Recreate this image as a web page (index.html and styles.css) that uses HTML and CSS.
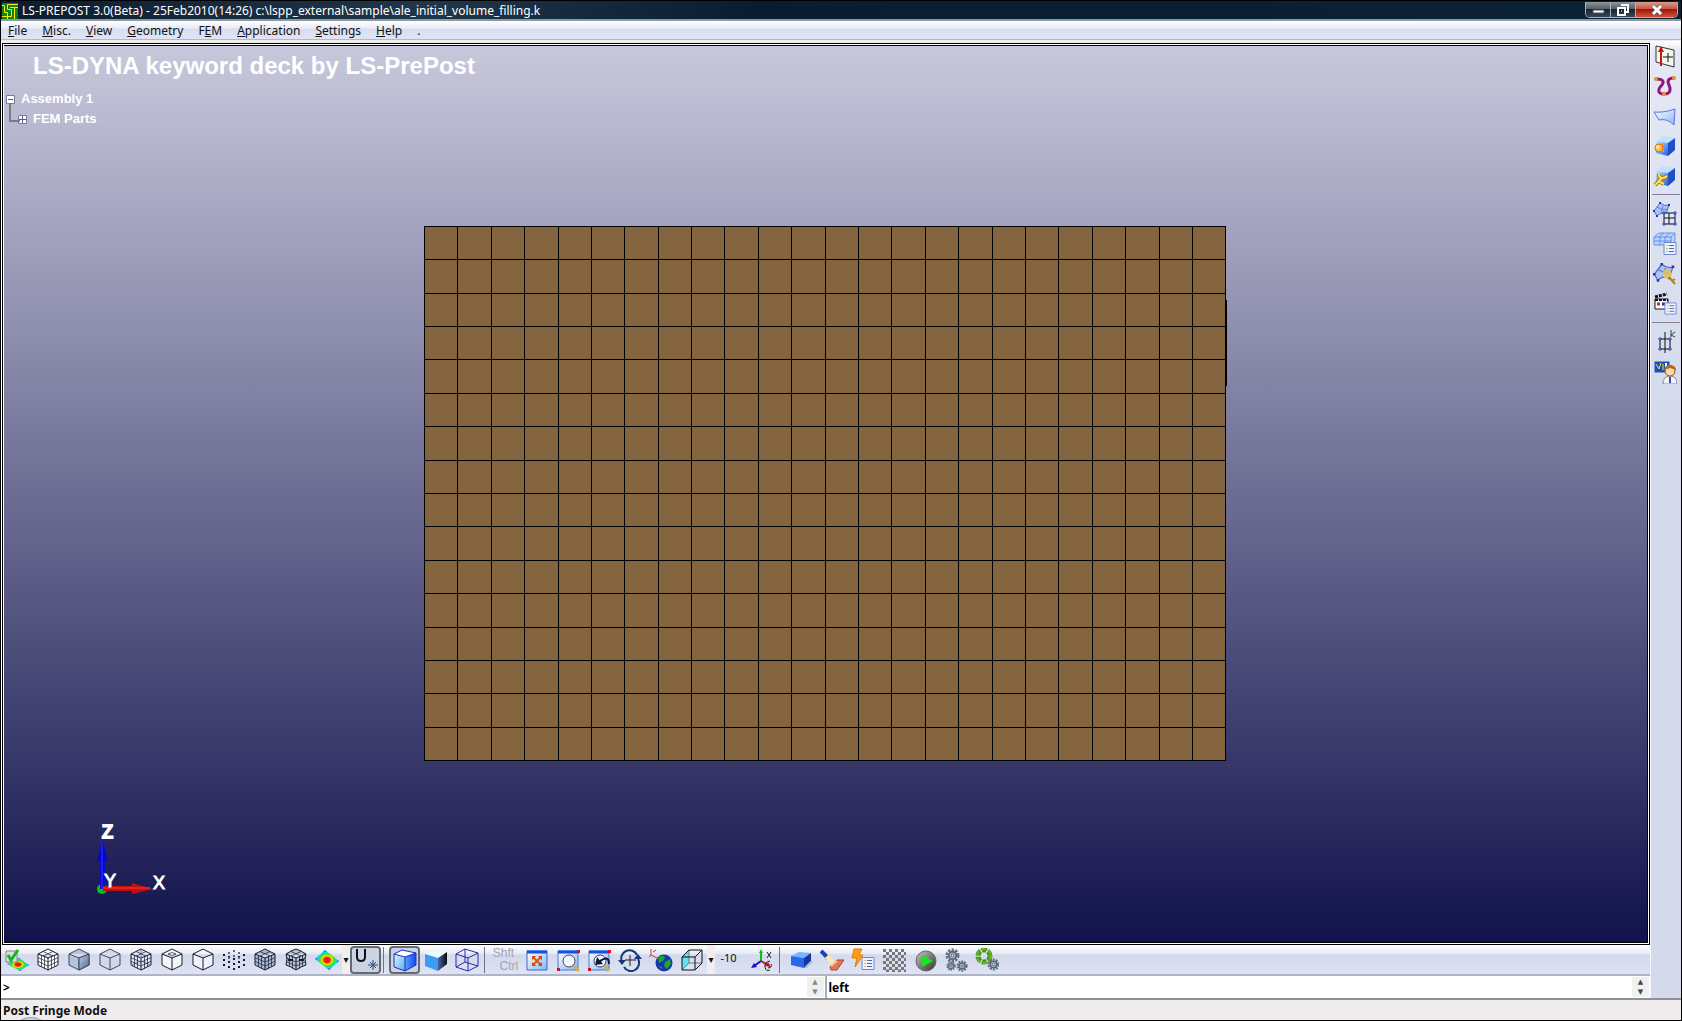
FILE: index.html
```html
<!DOCTYPE html>
<html lang="en">
<head>
<meta charset="utf-8">
<title>LS-PREPOST 3.0(Beta)</title>
<link rel="stylesheet" href="styles.css">
</head>
<body>
<svg class="defs" aria-hidden="true">
  <defs>
    <linearGradient id="g-blue" x1="0" y1="0" x2="1" y2="1"><stop offset="0" stop-color="#c8e4ff"/><stop offset="1" stop-color="#1c5ce8"/></linearGradient>
    <linearGradient id="g-front" x1="0" y1="0" x2="1" y2="1"><stop offset="0" stop-color="#e0f4ff"/><stop offset="1" stop-color="#58a8f8"/></linearGradient>
    <linearGradient id="g-deep" x1="0" y1="0" x2="1" y2="0"><stop offset="0" stop-color="#58a0f8"/><stop offset="1" stop-color="#1848f0"/></linearGradient>
    <linearGradient id="g-dark" x1="0" y1="0" x2="1" y2="0"><stop offset="0" stop-color="#4a6a9c"/><stop offset="1" stop-color="#050a14"/></linearGradient>
    <linearGradient id="g-steel" x1="0" y1="0" x2="1" y2="1"><stop offset="0" stop-color="#c4d0e4"/><stop offset="1" stop-color="#4c6494"/></linearGradient>
    <linearGradient id="g-window" x1="0" y1="0" x2="1" y2="1"><stop offset="0" stop-color="#fff"/><stop offset="1" stop-color="#86b4f6"/></linearGradient>
    <linearGradient id="g-ball" x1="0" y1="0" x2="1" y2="1"><stop offset="0" stop-color="#c8c8c8"/><stop offset="1" stop-color="#303030"/></linearGradient>
    <radialGradient id="g-fringe"><stop offset="0" stop-color="#e01010"/><stop offset=".28" stop-color="#f03010"/><stop offset=".42" stop-color="#ffe800"/><stop offset=".6" stop-color="#30e030"/><stop offset=".78" stop-color="#10e0e8"/><stop offset="1" stop-color="#1040f0"/></radialGradient>
    <symbol id="cube" viewBox="0 0 24 24"><path d="M12 1 22 6V17L12 22 2 17V6ZM2 6l10 4 10-4M12 10V22"/></symbol>
    <symbol id="mesh" viewBox="0 0 24 24"><path d="M5.500 7.500V18.500M8.500 8.500V20.500M2 9.700 12 14 22 9.700M2 13.300 12 18 22 13.300M15.500 8.500V20.500M18.500 7.500V18.500M7 3.500 17 8M17 3.500 7 8" stroke-width=".7"/></symbol>
    <symbol id="list" viewBox="0 0 14 14"><path d="M1 1H13V13H1Z" fill="#eef2ff" stroke="#7088cc"/><path d="M3 4h2M3 7h2M3 10h2" stroke="#d8b860" stroke-width="1"/><path d="M6 4h5M6 7h5M6 10h5" stroke="#5068b0"/></symbol>
    <symbol id="bluebox" viewBox="0 0 24 24"><path d="M3 7 10 2 22 4 15 9Z" fill="#c0e0ff"/><path d="M3 7 15 9V22L3 19Z" fill="url(#g-blue)"/><path d="M15 9 22 4V16L15 22Z" fill="#1c50c4"/></symbol>
    <symbol id="patch" viewBox="0 0 24 24"><path d="M1 9 7 1Q12 5 16 3L13 12Q7 10 4 14Z" fill="#a8c4f8" stroke="#5868c8"/><path d="M4 5Q9 9 15 7M10 4 8 11" stroke="#6880d8" fill="none"/><path d="M0 9h2M6 1h2M15 3h2M12 12h2M3 14h2" stroke="#2838a8" stroke-width="2"/></symbol>
    <symbol id="gear" viewBox="0 0 16 16"><circle cx="8" cy="8" r="6" fill="none" stroke="#627080" stroke-width="3" stroke-dasharray="2.400 1.400"/><circle cx="8" cy="8" r="4" fill="#b8ccd8" stroke="#5a6874" stroke-width="2"/><circle cx="8" cy="8" r="1.500" fill="#fff" stroke="#345"/></symbol>
  </defs>
</svg>

<div class="app">
  <header class="titlebar">
    <svg class="logo" viewBox="0 0 16 16" aria-hidden="true"><path d="M0 0H16V16H0Z" fill="#108010"/><path d="M0 2.500H2.500V9.500H5.500V16M16 1.500H5.500V6.500H9.500V13.500H0M16 4.500H12.500V16M8 4.500H12" fill="none" stroke="#f4f000"/></svg>
    <h1 class="title">LS-PREPOST 3.0(Beta) - 25Feb2010(14:26) c:\lspp_external\sample\ale_initial_volume_filling.k</h1>
    <div class="caption">
      <button class="cap" aria-label="Minimize"><svg viewBox="0 0 24 16"><path d="M7 8H18V11H7Z" fill="#fff" stroke="#555"/></svg></button>
      <button class="cap" aria-label="Restore"><svg viewBox="0 0 24 16"><path d="M10 3H17V10H15M7 6H14V13H7Z" fill="none" stroke="#fff" stroke-width="2"/><path d="M10 9h1" stroke="#fff"/></svg></button>
      <button class="cap close" aria-label="Close"><svg viewBox="0 0 24 16"><path d="M8 4 16 12M16 4 8 12" stroke="#556" stroke-width="4"/><path d="M8 4 16 12M16 4 8 12" stroke="#fff" stroke-width="3"/></svg></button>
    </div>
  </header>

  <nav class="menu">
    <button><u>F</u>ile</button><button><u>M</u>isc.</button><button><u>V</u>iew</button><button><u>G</u>eometry</button><button>F<u>E</u>M</button><button><u>A</u>pplication</button><button><u>S</u>ettings</button><button><u>H</u>elp</button><button>.</button>
  </nav>

  <div class="work">
    <main class="main">
      <section class="frame">
        <div class="view">
          <svg class="model" viewBox="0 0 1643 896" aria-label="Mesh">
            <path d="M420 180H1221V714H420Z" fill="#84643e"/>
            <path d="M420 180V714M453 180V714M487 180V714M520 180V714M554 180V714M587 180V714M620 180V714M654 180V714M687 180V714M720 180V714M754 180V714M787 180V714M821 180V714M854 180V714M887 180V714M921 180V714M954 180V714M988 180V714M1021 180V714M1054 180V714M1088 180V714M1121 180V714M1155 180V714M1188 180V714M1221 180V714M420 180H1221M420 213H1221M420 247H1221M420 280H1221M420 313H1221M420 347H1221M420 380H1221M420 414H1221M420 447H1221M420 480H1221M420 514H1221M420 547H1221M420 581H1221M420 614H1221M420 647H1221M420 681H1221M420 714H1221M1222 254V339" transform="translate(.5 .5)" class="lines"/>
          </svg>
          <h2 class="deck">LS-DYNA keyword deck by LS-PrePost</h2>
          <ul class="tree">
            <li><svg viewBox="0 0 9 9"><path d="M.5.5H8.500V8.500H.5Z" fill="#fff" stroke="#777a9c"/><path d="M2 4.500H7" stroke="#555880"/></svg>Assembly 1</li>
            <li class="child"><svg viewBox="0 0 9 9"><path d="M.5.5H8.500V8.500H.5Z" fill="#fff" stroke="#777a9c"/><path d="M1 4.500H8M4.500 1V8" stroke="#555880"/></svg>FEM Parts</li>
          </ul>
          <svg class="triad" viewBox="0 0 80 80" aria-label="Axes">
            <circle cx="12" cy="64" r="5" fill="#10c010"/>
            <path d="M10 64V36H7L12.500 14 18 36H15V64Z" fill="#0808c8"/><path d="M12 16V64" stroke="#1c1cf0" stroke-width="2"/>
            <path d="M13 61H42V58L63 64 42 69V66H13Z" fill="#c01010"/><path d="M13 63H60" stroke="#e82020" stroke-width="2"/>
            <g class="axis"><text x="12" y="13" class="bold">Z</text><text x="14" y="62">Y</text><text x="63" y="64">X</text></g>
          </svg>
        </div>
      </section>

      <div class="tools">
        <button class="tool" aria-label="Fringe check"><svg viewBox="0 0 24 24"><path d="M2 16 14 10 24 17 15 23Z" fill="url(#g-fringe)"/><path d="M1 3H12V14H1Z" fill="#ddd" stroke="#888"/><path d="M3 7 6 12 13 2" fill="none" stroke="#10b818" stroke-width="3"/></svg></button>
        <button class="tool" aria-label="Mesh"><svg class="ln" viewBox="0 0 24 24"><use href="#cube" fill="#fff"/><use href="#mesh"/></svg></button>
        <button class="tool" aria-label="Shaded"><svg class="ln gray" viewBox="0 0 24 24"><use href="#cube" fill="#b4c4dc"/><path d="M12 10 22 6V17L12 22Z" fill="url(#g-steel)"/></svg></button>
        <button class="tool" aria-label="Flat"><svg class="ln gray" viewBox="0 0 24 24"><use href="#cube" fill="#d2d8e4"/></svg></button>
        <button class="tool" aria-label="Wireframe"><svg class="ln" viewBox="0 0 24 24"><use href="#cube" fill="#e4e8f8"/><path d="M12 2V14M12 13 2 17M12 13 22 17" stroke="#7080b0"/><use href="#mesh"/></svg></button>
        <button class="tool" aria-label="Feature"><svg class="ln" viewBox="0 0 24 24"><use href="#cube" fill="#f4f6fc"/><path d="M8 6 12 4.500 16 6 12 7.500Z" fill="#fff" stroke-width=".7"/></svg></button>
        <button class="tool" aria-label="Edge"><svg class="ln" viewBox="0 0 24 24"><use href="#cube" fill="#f0f2fa"/></svg></button>
        <button class="tool" aria-label="Nodes"><svg class="dots" viewBox="0 0 24 24"><path d="M2 6V18M7 8V20M12 10V22M17 8V20M22 6V18"/><path d="M7 4V12M12 2V9M17 4V12" class="far"/></svg></button>
        <button class="tool" aria-label="Shaded mesh"><svg class="ln" viewBox="0 0 24 24"><use href="#cube" fill="#a8b8d4"/><use href="#mesh"/></svg></button>
        <button class="tool" aria-label="Shrunk mesh"><svg class="ln" viewBox="0 0 24 24"><path d="M12 1 17 3 22 6 21 11 22 17 17 19 12 22 7 19 2 17 3 11 2 6 7 3ZM2 6 12 10 22 6M12 10V22" fill="#b4c2da"/><use href="#mesh"/><path d="M4 12H9M15 12H20" stroke-width="2"/></svg></button>
        <button class="tool" aria-label="Fringe"><svg viewBox="0 0 24 24"><path d="M0 11 10 2 24 13 14 22Z" fill="url(#g-fringe)"/></svg></button>
        <button class="drop" aria-label="Fringe options">▾</button>
        <button class="tool on" aria-label="Unreferenced nodes"><svg viewBox="0 0 24 24"><path d="M3 1V9Q3 13 7 13T11 9V1" fill="none" stroke="#111" stroke-width="2"/><path d="M19 12V22M14 17H24M16 14 22 20M22 14 16 20" stroke="#304878"/></svg></button>
        <hr>
        <button class="tool on" aria-label="Shade with edges"><svg viewBox="0 0 24 24"><path d="M1 6 12 9V23L1 19Z" fill="url(#g-front)"/><path d="M1 6 9 2 23 5 12 9Z" fill="#fff"/><path d="M12 9 23 5V17L12 23Z" fill="url(#g-deep)"/><path d="M1 6 9 2 23 5V17L12 23 1 19ZM1 6 12 9 23 5M12 9V23" fill="none" stroke="#1830c0"/></svg></button>
        <button class="tool" aria-label="Shade"><svg viewBox="0 0 24 24"><path d="M1 6 9 2 23 4 14 10Z" fill="#eef8ff"/><path d="M1 6 14 10V23L1 18Z" fill="#3c9cf4"/><path d="M14 10 23 4V16L14 23Z" fill="url(#g-dark)"/></svg></button>
        <button class="tool" aria-label="Wire"><svg viewBox="0 0 24 24"><path d="M1 6 10 1 23 5V18L13 23 1 19ZM1 6 13 10 23 5M13 10V23M10 1V14L1 19M10 14 23 18" fill="none" stroke="#2828b0"/></svg></button>
        <hr>
        <button class="tool keys">Shft<br>&nbsp; Ctrl</button>
        <button class="tool" aria-label="Fit"><svg viewBox="0 0 24 24"><path d="M2 3H22V22H2Z" fill="url(#g-window)" stroke="#3868d8"/><path d="M2 4H22" stroke="#1850e0" stroke-width="3"/><path d="M8 9 16 17M16 9 8 17" stroke="#e05808" stroke-width="2"/><path d="M7 8H11L7 12ZM17 8V12L13 8ZM7 18V14L11 18ZM17 18H13L17 14Z" fill="#e04008"/></svg></button>
        <button class="tool" aria-label="Zoom window"><svg viewBox="0 0 24 24"><path d="M2 3H22V22H2Z" fill="url(#g-window)" stroke="#4878dc"/><path d="M2 4H22" stroke="#1850e0" stroke-width="3"/><circle cx="13" cy="13" r="6" fill="#f4f8ff" stroke="#445"/><path d="M18 18 23 23" stroke="#d8b040" stroke-width="3"/><path d="M21 2h3v3h-3zM1 20h3v3H1z" fill="#d01020"/></svg></button>
        <button class="tool" aria-label="Zoom back"><svg viewBox="0 0 24 24"><path d="M2 3H22V22H2Z" fill="url(#g-window)" stroke="#4878dc"/><path d="M2 4H22" stroke="#1850e0" stroke-width="3"/><circle cx="13" cy="13" r="6" fill="#f4f8ff" stroke="#445"/><path d="M18 18 22 23" stroke="#d8b040" stroke-width="3"/><path d="M22 16Q22 6 12 14" fill="none" stroke="#101840" stroke-width="2"/><path d="M8 17 10 9 16 16Z" fill="#101840"/><path d="M21 2h3v3h-3zM1 20h3v3H1z" fill="#d01020"/></svg></button>
        <button class="tool" aria-label="Rotate"><svg viewBox="0 0 24 24"><path d="M4 14A8 8 0 0 1 19 7M20 11A8 8 0 0 1 6 19" fill="none" stroke="#183878" stroke-width="2"/><path d="M0 12H8L4 17ZM16 11H24L20 6Z" fill="#183878"/><path d="M12 7V18M7 12H18" stroke="#222"/></svg></button>
        <button class="tool" aria-label="Globe"><svg viewBox="0 0 24 24"><circle cx="15" cy="15" r="8.500" fill="#1c34b0"/><path d="M9 10Q13 6 16 9L14 13 10 15ZM16 14 21 11 22 16 18 21 15 18ZM9 18 13 19V21Z" fill="#18a828"/><path d="M2 1V7L8 10M2 7 0 9M4 4 7 2" fill="none" stroke="#e03030"/></svg></button>
        <button class="tool" aria-label="View cube"><svg viewBox="0 0 24 24"><path d="M2 9 9 2V15L2 22Z" fill="#60e0f0"/><path d="M9 2V15H22M9 15 2 22" fill="none" stroke="#778"/><path d="M2 9H15V22H2ZM2 9 9 2H22V15L15 22M15 9 22 2" fill="none" stroke="#111"/></svg></button>
        <button class="drop" aria-label="View options">▾</button>
        <button class="tool angle">-10</button>
        <button class="tool" aria-label="Axis rotate"><svg viewBox="0 0 24 24"><path d="M11 13V3" stroke="#10c010" stroke-width="2"/><path d="M9 5 11 1 13 5Z" fill="#10c010"/><path d="M11 13 4 18" stroke="#1010d0" stroke-width="2"/><path d="M1 20 4 15 7 19Z" fill="#1010d0"/><path d="M11 13 18 17" stroke="#d01010" stroke-width="2"/><path d="M21 19 15 18 18 14Z" fill="#d01010"/><path d="M17 4 21 10M21 4 17 10M20 13Q14 14 15 19T20 22M18 20Q23 19 21 16" fill="none" stroke="#222"/></svg></button>
        <hr>
        <button class="tool" aria-label="Block"><svg viewBox="0 0 24 24"><path d="M2 8 10 4 22 5 15 10Z" fill="#78b4ff"/><path d="M2 8 15 10V20L2 17Z" fill="#2868e8"/><path d="M15 10 22 5V13L15 20Z" fill="#1038a0"/><path d="M16 20 23 13" stroke="#a8b8d0" stroke-width="2"/></svg></button>
        <button class="tool" aria-label="Erase"><svg viewBox="0 0 24 24"><path d="M1 3 8 10" stroke="#1844b8" stroke-width="4"/><path d="M7 8 13 15" stroke="#f4eab0" stroke-width="5"/><path d="M10 19 17 12H24L17 22H11Z" fill="#e07858" stroke="#a84830"/><path d="M11 18 17 13" stroke="#fcc0a8" stroke-width="2"/></svg></button>
        <button class="tool" aria-label="Quick list"><svg viewBox="0 0 24 24"><path d="M3 1H11L8 7H12L4 19 6 10H1Z" fill="#fca010" stroke="#e87808"/><use href="#list" x="10" y="8" width="14" height="15"/></svg></button>
        <button class="tool" aria-label="Transparency"><svg viewBox="0 0 24 24"><path d="M1 2.500H24M1 8.500H24M1 14.500H24M1 20.500H24" class="check"/><path d="M4 5.500H24M4 11.500H24M4 17.500H24M4 23H24" class="check"/></svg></button>
        <button class="tool" aria-label="Run"><svg viewBox="0 0 24 24"><circle cx="13" cy="13" r="10" fill="url(#g-ball)" stroke="#666"/><path d="M9 7 20 13 9 19Z" fill="#18e818"/></svg></button>
        <button class="tool" aria-label="Settings gears"><svg viewBox="0 0 24 24"><use href="#gear" x="1" y="0" width="15" height="15"/><use href="#gear" x="12" y="12" width="12" height="12"/><use href="#gear" x="2" y="13" width="10" height="10"/></svg></button>
        <button class="tool" aria-label="Refresh gears"><svg viewBox="0 0 24 24"><circle cx="9" cy="8" r="6" fill="none" stroke="#489818" stroke-width="5" stroke-dasharray="5 1.300"/><circle cx="9" cy="8" r="7" fill="none" stroke="#70b828" stroke-width="2" stroke-dasharray="5 2.300"/><use href="#gear" x="12" y="10" width="13" height="13"/></svg></button>
      </div>

      <div class="commands">
        <div class="field"><input aria-label="Command" value="&gt;"><div class="spin dim"><button aria-label="Previous">▲</button><button aria-label="Next">▼</button></div></div>
        <div class="field"><input aria-label="History" value="left"><div class="spin"><button aria-label="Previous entry">▲</button><button aria-label="Next entry">▼</button></div></div>
      </div>
    </main>

    <aside class="side">
      <button class="tool" aria-label="Reference plane"><svg viewBox="0 0 24 24"><path d="M3 2 21 6V23L3 18Z" fill="#f0f8ee" stroke="#333"/><path d="M8 22V6" stroke="#d01010" stroke-width="2"/><path d="M5 8 8 2 11 8Z" fill="#d01010"/><path d="M15 9V18M10 13H20" stroke="#111"/></svg></button>
      <button class="tool" aria-label="Curve"><svg viewBox="0 0 24 24"><path d="M3 5C12 5 11 9 8 12S4 20 11 20S18 15 16 11S15 4 21 4" fill="none" stroke="#901878" stroke-width="3"/><circle cx="3" cy="5" r="2" fill="#f09020"/><circle cx="11" cy="20" r="2" fill="#f09020"/><circle cx="21" cy="4" r="2" fill="#f09020"/></svg></button>
      <button class="tool" aria-label="Surface"><svg viewBox="0 0 24 24"><path d="M1 8Q10 9 22 5L21 21Q14 14 6 16Z" fill="url(#g-window)" stroke="#5878d8"/></svg></button>
      <button class="tool" aria-label="Solid"><svg viewBox="0 0 24 24"><use href="#bluebox"/><path d="M6 10H11V18H6Z" fill="#f09828"/><circle cx="6" cy="14" r="4" fill="#fcb840" stroke="#d87010"/><circle cx="5" cy="13" r="2" fill="#ffe890"/></svg></button>
      <button class="tool" aria-label="Geometry tools"><svg viewBox="0 0 24 24"><use href="#bluebox"/><path d="M2 21 9 14M6 10Q6 14 9 14T14 12M5 17 11 20" fill="none" stroke="#a87c08" stroke-width="4"/><path d="M2 21 9 14M6 10Q6 14 9 14T14 12M5 17 11 20" fill="none" stroke="#fce060" stroke-width="2"/></svg></button>
      <hr>
      <button class="tool" aria-label="Mesh generation"><svg viewBox="0 0 24 24"><use href="#patch"/><path d="M11 11H22V22H11ZM16 11V22M11 16H22" fill="#dce4f8" stroke="#111"/><path d="M10 10h2v2h-2zM21 10h2v2h-2zM10 21h2v2h-2zM21 21h2v2h-2z" fill="#fff" stroke="#2830a0"/></svg></button>
      <button class="tool" aria-label="Model"><svg viewBox="0 0 24 24"><path d="M1 5 6 1H22L18 5V13H1ZM1 5H18L22 1V9L18 13M7 5V13M12 5V13M1 9H18M6 5 11 1M12 5 17 1" fill="#b8d4ff" stroke="#6890e0"/><use href="#list" x="10" y="9" width="14" height="15"/></svg></button>
      <button class="tool" aria-label="Element tools"><svg viewBox="0 0 24 24"><use href="#patch" y="1" width="30" height="30"/><circle cx="14" cy="12" r="3" fill="none" stroke="#e8c050" stroke-width="3"/><path d="M16 15 22 22M19 19 22 17" stroke="#b88418" stroke-width="2"/></svg></button>
      <button class="tool" aria-label="Post"><svg viewBox="0 0 24 24"><path d="M2 7H15V17H2Z" fill="#fff" stroke="#111"/><path d="M2 5 14 2" stroke="#111" stroke-width="3" stroke-dasharray="3 1"/><path d="M2 8H15" stroke="#111" stroke-width="2" stroke-dasharray="3 1"/><path d="M4 12h3" stroke="#d02020" stroke-width="3"/><path d="M9 12h3" stroke="#2030d0" stroke-width="3"/><use href="#list" x="11" y="9" width="13" height="15"/></svg></button>
      <hr>
      <button class="tool" aria-label="Key points"><svg viewBox="0 0 24 24"><path d="M12 2V23M7 9H17V19H7Z" fill="none" stroke="#111"/><path d="M6 8h2v2H6zM16 8h2v2h-2zM6 18h2v2H6zM16 18h2v2h-2z" fill="#fff" stroke="#2830a0"/><path d="M18 0V7M22 2 18 5 22 7" fill="none" stroke="#185030"/></svg></button>
      <button class="tool" aria-label="User tools"><svg viewBox="0 0 24 24"><path d="M1 1H17V13H1Z" fill="#1c50b8" stroke="#d8e0f0"/><path d="M3 4 6 9 8 3M10 4V10" stroke="#f0e040" fill="none"/><path d="M13 3V10" stroke="#fff" stroke-width="2"/><path d="M10 24Q10 16 17 16T24 24Z" fill="#f4f4fa" stroke="#889"/><circle cx="17" cy="11" r="5" fill="#fcd8a8" stroke="#905010"/><path d="M11 10Q13 4 18 5T23 10L17 8Z" fill="#b86818"/><path d="M17 17V23" stroke="#2850b0" stroke-width="2"/></svg></button>
    </aside>
  </div>

  <footer class="status"><span class="orb"></span><span class="msg">Post Fringe Mode</span></footer>
</div>
</body>
</html>
```
FILE: styles.css
```css
* { box-sizing: border-box; }
body { margin: 0; background: #000; font: 12px/16px "Noto Sans", "Open Sans", sans-serif; color: #111; }
button { border: 0; padding: 0; margin: 0; background: none; font: inherit; color: inherit; }
svg { display: block; }
.defs { position: absolute; width: 0; height: 0; }

.app { display: flex; flex-direction: column; height: 100vh; min-height: 480px; padding: 0 1px 1px; }

.titlebar { display: flex; flex: none; align-items: center; height: 21px; padding: 1px 3px 0 1px; background: linear-gradient(90deg, #0c1c30, #20364a 25%, #0a1c30 45%, #0c2236); border-top: 1px solid #000; border-bottom: 2px solid #8a9ba4; color: #fff; }
.logo { width: 16px; height: 16px; }
.title { flex: 1; margin: 0 0 0 4px; font-size: 12px; font-weight: 400; line-height: 16px; white-space: nowrap; }
.caption { display: flex; align-self: flex-start; height: 16px; border: 1px solid #a8b4bc; border-top: 0; border-radius: 0 0 5px 5px; overflow: hidden; }
.cap { width: 25px; border-right: 1px solid #a8b4bc; background: linear-gradient(#8c98a0, #52606c 45%, #182430 50%, #384858); }
.cap svg { height: 16px; margin: auto; }
.close { width: 41px; border-right: 0; background: linear-gradient(#dc9a8c, #c45848 45%, #a01808 50%, #d0503c); }

.menu { display: flex; flex: none; gap: 15px; height: 19px; padding: 1px 7px 0; background: linear-gradient(#fff, #e8ebf6 40%, #d8def0 45%, #e0e5f6); border-bottom: 1px solid #b4b8cc; }
.menu button { line-height: 17px; }

.work { display: flex; flex: 1; min-height: 0; border-top: 3px solid #f0ecec; background: #fff; }
.main { display: flex; flex: 1; flex-direction: column; min-width: 0; }
.frame { flex: 1; min-height: 0; margin-left: 1px; padding: 1px; border: 1px solid #000; background: #fff; }
.view { position: relative; height: 100%; overflow: hidden; border: 1px solid #000; border-left: 0; background: linear-gradient(#c8c8dc, #12124c); color: #fff; }
.model { width: 100%; height: 100%; }
.lines { fill: none; stroke: #000; stroke-linecap: square; shape-rendering: crispEdges; }
.deck { position: absolute; left: 29px; top: 6px; margin: 0; font: bold 24px/28px "Liberation Sans", Arial, sans-serif; white-space: nowrap; }
.tree { position: absolute; left: 2px; top: 43px; margin: 0; padding: 0; list-style: none; font: bold 13px/20px "Liberation Sans", Arial, sans-serif; }
.tree li { display: flex; align-items: center; gap: 6px; }
.tree svg { width: 9px; height: 9px; }
.tree .child { padding-left: 12px; }
.child::before { content: ""; position: absolute; left: 3px; top: 15px; width: 9px; height: 16px; border: solid #777a88; border-width: 0 0 2px 2px; }
.triad { position: absolute; left: 86px; bottom: 37px; width: 80px; height: 80px; overflow: visible; }
.axis { fill: #fff; font: 18px "Liberation Sans", Arial, sans-serif; stroke: #fff; }
.bold { stroke-width: 2; }

.tools { display: flex; flex: none; align-items: center; height: 31px; background: linear-gradient(#fff, #e8ecf6 28%, #d4daec 35%, #dee3f5); border-bottom: 2px solid #b0b4c4; }
.tool { display: flex; flex: none; align-items: center; justify-content: center; width: 31px; height: 28px; }
.tool svg { flex: none; width: 24px; height: 24px; }
.on { border: 2px solid #666a70; border-radius: 4px; background: #ccd4e4; }
.drop { flex: none; width: 8px; height: 29px; overflow: hidden; background: #f0eeee; font: 10px/28px "DejaVu Sans", sans-serif; }
.tools hr { flex: none; align-self: stretch; width: 8px; margin: 2px 0 1px; border: 0; background: linear-gradient(#707488, #707488) 2px 0 / 1px 100% no-repeat; }
.tool.keys { font: 12px/13px "Liberation Sans", Arial, sans-serif; color: #a4a4a8; text-align: left; }
.tool.angle { padding: 0 4px 4px 0; font-size: 11px; }
.ln { fill: none; stroke: #181c28; }
.gray { stroke: #40485c; }
.dots { stroke: #181c28; stroke-width: 2; stroke-dasharray: 2 3; }
.far { stroke: #606c98; }
.check { stroke: #777; stroke-width: 3; stroke-dasharray: 3 3; }

.commands { display: flex; flex: none; height: 22px; gap: 2px; background: #a8acb8; }
.field { display: flex; flex: 1; min-width: 0; background: #fff; }
.field input { flex: 1; min-width: 0; border: 0; padding: 1px 2px 0; background: none; font: bold 12px/20px "Noto Sans", "Open Sans", sans-serif; color: #000; }
.spin { display: flex; flex-direction: column; width: 17px; margin: 1px; background: #f0f0f0; font: 7px/10px "DejaVu Sans", sans-serif; color: #444; }
.spin button { flex: 1; min-height: 0; }
.spin.dim { color: #888; }

.side { display: flex; flex: none; flex-direction: column; align-items: center; width: 31px; margin-top: -2px; background: linear-gradient(#fff, #e4e8f6 1%, #d4daec 40%, #d4daec); border-left: 1px solid #f4f6fc; }
.side .tool { width: 30px; height: 30px; padding-right: 2px; }
.side hr { flex: none; width: 28px; height: 8px; margin: 0; border: 0; background: linear-gradient(#808494, #808494) 0 3px / 100% 1px no-repeat; }

.status { position: relative; flex: none; height: 22px; padding: 3px 2px 0; overflow: hidden; border-top: 2px solid #8c9098; background: #f0ecec; font-weight: 700; line-height: 16px; }
.msg { position: relative; }
.orb { position: absolute; left: 17px; top: 17px; width: 26px; height: 16px; border: 1px solid #90a8b8; border-radius: 50%; background: #c4d4e0; }
```
